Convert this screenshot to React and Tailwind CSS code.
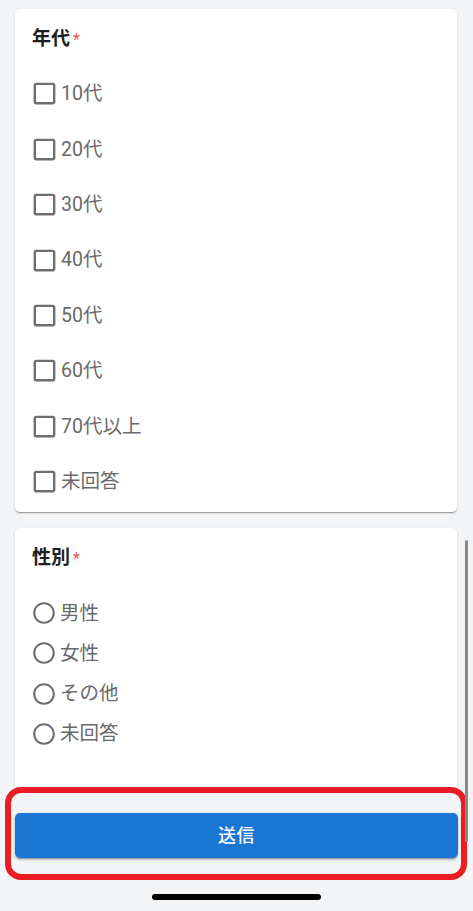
import React from 'react'

const font = { fontFamily: 'Roboto, "Noto Sans CJK JP", sans-serif' }

const ages = ['10代', '20代', '30代', '40代', '50代', '60代', '70代以上', '未回答']
const genders = ['男性', '女性', 'その他', '未回答']

function BoxIcon() {
  return (
    <svg viewBox="0 0 24 24" className="w-[29px] h-[29px] shrink-0 fill-[#6e6e6e]">
      <path d="M19 5v14H5V5h14m0-2H5c-1.1 0-2 .9-2 2v14c0 1.1.9 2 2 2h14c1.1 0 2-.9 2-2V5c0-1.1-.9-2-2-2z" />
    </svg>
  )
}

function RadioIcon() {
  return (
    <svg viewBox="0 0 24 24" className="w-[26px] h-[26px] shrink-0 fill-[#6e6e6e]">
      <path d="M12 2C6.48 2 2 6.48 2 12s4.48 10 10 10 10-4.48 10-10S17.52 2 12 2zm0 18c-4.42 0-8-3.58-8-8s3.58-8 8-8 8 3.58 8 8-3.58 8-8 8z" />
    </svg>
  )
}

function Title({ children }) {
  return (
    <div className="flex items-center h-[24px] pl-[17px]">
      <span className="text-[19px] font-bold text-[#1e1e1e] leading-none">{children}</span>
      <span className="text-[16px] text-[#ef5350] ml-[3px] mt-[3px] leading-none">*</span>
    </div>
  )
}

export default function App() {
  return (
    <div className="relative w-[473px] h-[911px] overflow-hidden bg-[#f3f4f6] flex flex-col" style={font}>
      <div className="pt-[9px] px-[15px] flex flex-col gap-[16px]">
        <div className="bg-white w-[442px] h-[503px] rounded-[5px] pt-[17px] shadow-[0_2px_1px_-1px_rgba(0,0,0,0.2),0_1px_1px_0_rgba(0,0,0,0.14),0_1px_3px_0_rgba(0,0,0,0.12)]">
          <Title>年代</Title>
          <div className="mt-[16px] flex flex-col">
            {ages.map((a) => (
              <div key={a} className="h-[55.45px] flex items-center pl-[15px]">
                <BoxIcon />
                <span className="ml-[2px] text-[19.5px] text-[#6a6a6a]">{a}</span>
              </div>
            ))}
          </div>
        </div>

        <div className="bg-white w-[442px] h-[259px] rounded-t-[5px] pt-[17px] shadow-[0_2px_1px_-1px_rgba(0,0,0,0.2),0_1px_1px_0_rgba(0,0,0,0.14),0_1px_3px_0_rgba(0,0,0,0.12)]">
          <Title>性別</Title>
          <div className="mt-[24px] flex flex-col">
            {genders.map((g) => (
              <div key={g} className="h-[40.3px] flex items-center pl-[16px]">
                <RadioIcon />
                <span className="ml-[3px] text-[19.5px] text-[#6a6a6a]">{g}</span>
              </div>
            ))}
          </div>
        </div>
      </div>

      <div className="bg-[#f3f4f6] flex-1 flex flex-col">
        <div className="ml-[5px] w-[462px] h-[93px] border-[6px] border-[#ec1c24] rounded-[16px] pt-[20px] pl-[4px] pr-[3px]">
          <button className="w-full h-[45px] rounded-[5px] bg-[#1976d2] text-white text-[18px] font-medium tracking-wide shadow-[0_3px_1px_-2px_rgba(0,0,0,0.2),0_2px_2px_0_rgba(0,0,0,0.14),0_1px_5px_0_rgba(0,0,0,0.12)]">
            送信
          </button>
        </div>
        <div className="mt-[14px] mx-auto w-[169px] h-[6px] rounded-full bg-black" />
      </div>

      <div className="absolute left-[465px] top-[540px] w-[3px] h-[302px] rounded-full bg-[#8a8a8a]" />
    </div>
  )
}
